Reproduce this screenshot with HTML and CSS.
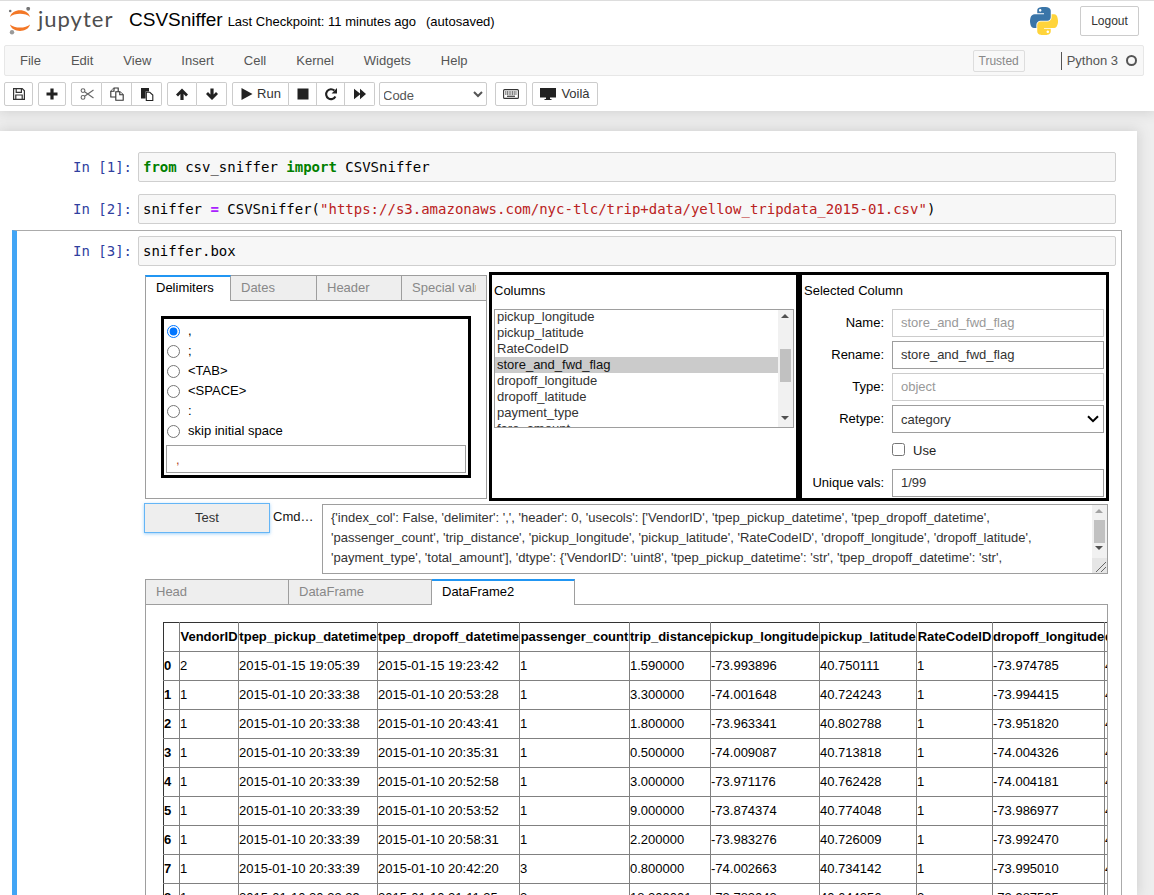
FILE: index.html
```html
<!DOCTYPE html>
<html lang="en">
<head>
<meta charset="utf-8">
<title>CSVSniffer</title>
<link rel="stylesheet" href="styles.css">
</head>
<body>
<header class="site-head">
  <div class="title-bar">
    <div class="logo">
      <svg class="logo-mark" width="24" height="28" viewBox="8 7 24 28">
        <path fill="#f37726" d="M10 17C12 8 28 8 30 17C26 12.6 14 12.6 10 17Z"/>
        <path fill="#f37726" d="M10 24.5C12 33 28 33 30 24.5C26 28.6 14 28.6 10 24.5Z"/>
        <circle cx="28.2" cy="8.8" r="1.9" fill="#767677"/>
        <circle cx="10.2" cy="11" r="1.3" fill="#767677"/>
        <circle cx="12" cy="32.2" r="2.2" fill="#9a9a9a"/>
      </svg>
      <span class="logo-word">jupyter</span>
    </div>
    <span class="nb-name">CSVSniffer</span>
    <span class="checkpoint">Last Checkpoint: 11 minutes ago</span>
    <span class="autosaved">(autosaved)</span>
    <svg class="py-logo" width="28" height="28" viewBox="0 0 111 111">
      <path fill="#3a75a8" d="M54.9 0C50.3 0 46 .4 42.1 1.1 30.8 3.1 28.7 7.3 28.7 15v10.2h26.8v3.4H18.6C10.8 28.7 4 33.3 1.9 42.3c-2.5 10.2-2.6 16.6 0 27.2C3.8 77.500 8.300 83.100 16.100 83.100h9.200V70.900c0-8.800 7.700-16.700 16.800-16.700h26.800c7.500 0 13.400-6.100 13.400-13.600V15c0-7.300-6.100-12.700-13.400-13.900C64.300.3 59.500 0 54.900 0Zm-14.500 8.200c2.800 0 5 2.300 5 5.100s-2.300 5.100-5 5.100-5-2.300-5-5.100 2.300-5.100 5-5.100Z"/>
      <path fill="#ffd43b" d="M85.600 28.700v11.900c0 9.200-7.800 17-16.700 17H42.100c-7.300 0-13.400 6.300-13.400 13.600v25.500c0 7.300 6.300 11.500 13.400 13.600 8.500 2.500 16.600 2.900 26.800 0 6.800-2 13.400-5.900 13.400-13.600V86.500H55.500v-3.400h40.200c7.800 0 10.700-5.400 13.400-13.600 2.800-8.400 2.700-16.500 0-27.200-1.900-7.800-5.600-13.600-13.400-13.600Zm-15.100 64.600c2.800 0 5 2.300 5 5.100s-2.300 5.100-5 5.100-5-2.300-5-5.100 2.300-5.100 5-5.100Z"/>
    </svg>
    <div class="logout">Logout</div>
  </div>
  <nav class="menubar">
    <span class="menu-item">File</span>
    <span class="menu-item">Edit</span>
    <span class="menu-item">View</span>
    <span class="menu-item">Insert</span>
    <span class="menu-item">Cell</span>
    <span class="menu-item">Kernel</span>
    <span class="menu-item">Widgets</span>
    <span class="menu-item">Help</span>
    <span class="trusted">Trusted</span>
    <span class="kernel-name">Python 3</span>
    <span class="kernel-dot"></span>
  </nav>
  <div class="toolbar">
    <div class="btn w29"><svg class="ico" viewBox="0 0 14 14"><path fill="none" stroke="#333" stroke-width="1.2" d="M1.600 1.600h8.600l2.200 2.200v8.600H1.600ZM4.200 1.600v3.800h5.200V1.600M3.800 12.400V8h6.400v4.400"/></svg></div>
    <div class="btn w28"><svg class="ico" viewBox="0 0 14 14"><path fill="#222" d="M5.400 1.500h3.200v3.900h3.900v3.200H8.600v3.900H5.400V8.600H1.500V5.400h3.900Z"/></svg></div>
    <div class="group">
      <div class="btn w31"><svg class="ico" viewBox="0 0 14 14"><g fill="none" stroke="#666" stroke-width="1.100"><circle cx="3" cy="3.600" r="1.900"/><circle cx="3" cy="10.400" r="1.900"/><path d="M4.600 4.700 13.500 11M4.600 9.300 13.500 3"/></g></svg></div>
      <div class="btn w30"><svg class="ico" viewBox="0 0 14 14"><g fill="#fff" stroke="#333" stroke-width="1.100"><path d="M.800 4.300 4 1h4.200v9H.800Z"/><path d="M4 1v3.300H.800"/><path d="M5.800 4.800h4.100l3.300 3V13.300H5.800Z"/><path d="M9.800 4.800v3h3.300"/></g></svg></div>
      <div class="btn w30"><svg class="ico" viewBox="0 0 14 14"><path fill="#222" d="M1 1h8v3.500H5.600v6.900H1Z"/><path fill="#fff" stroke="#222" stroke-width="1.100" d="M6.300 5.300h3.500l3 2.800v5.400H6.300Z"/></svg></div>
    </div>
    <div class="group">
      <div class="btn w30"><svg class="ico" viewBox="0 0 14 14"><path fill="#222" d="M7 1.500 13 7.500 11 9.500 8.600 7.100V13H5.400V7.100L3 9.500 1 7.500Z"/></svg></div>
      <div class="btn w30"><svg class="ico" viewBox="0 0 14 14"><path fill="#222" d="M7 13 13 7 11 5 8.600 7.400V1.500H5.400V7.400L3 5 1 7Z"/></svg></div>
    </div>
    <div class="group">
      <div class="btn run"><svg class="ico" viewBox="0 0 14 14"><path fill="#222" d="M1.500 1 12.500 7 1.500 13Z"/></svg><span>Run</span></div>
      <div class="btn w28"><svg class="ico" viewBox="0 0 14 14"><rect x="1.500" y="1.500" width="11" height="11" fill="#222"/></svg></div>
      <div class="btn w28"><svg class="ico" viewBox="0 0 14 14"><path fill="none" stroke="#222" stroke-width="2.100" d="M11.400 9.400A4.900 4.900 0 1 1 10.400 3.600"/><path fill="#222" d="M13 1v5.400H7.600Z"/></svg></div>
      <div class="btn w30"><svg class="ico" viewBox="0 0 14 14"><path fill="#222" d="M1 1.800 7 6.400V1.800L13 7 7 12.200V7.600L1 12.200Z"/></svg></div>
    </div>
    <select class="cell-type"><option>Code</option></select>
    <div class="btn kbd"><svg class="ico-wide" viewBox="0 0 16 14"><rect x=".600" y="2.600" width="14.800" height="8.800" rx="1" fill="none" stroke="#333" stroke-width="1.100"/><path stroke="#555" stroke-width="1.400" stroke-dasharray="1.100 .6" d="M2.200 5h11.600M2.200 7h11.600"/><path stroke="#555" stroke-width="1.400" d="M4 9.300h8"/></svg></div>
    <div class="btn voila"><svg class="ico-wide" viewBox="0 0 16 14"><path fill="#222" d="M0 1h16v9.500H0ZM6 10.500h4v1.500h1.500v1h-7v-1H6Z"/></svg><span>Voilà</span></div>
  </div>
</header>

<main class="notebook">
  <section class="cell">
    <div class="prompt">In&nbsp;[1]:</div>
    <div class="code"><b class="kw">from</b> csv_sniffer <b class="kw">import</b> CSVSniffer</div>
  </section>
  <section class="cell">
    <div class="prompt">In&nbsp;[2]:</div>
    <div class="code">sniffer <b class="op">=</b> CSVSniffer(<span class="str">"https://s3.amazonaws.com/nyc-tlc/trip+data/yellow_tripdata_2015-01.csv"</span>)</div>
  </section>
  <section class="cell cell-selected">
    <div class="input-row">
      <div class="prompt">In&nbsp;[3]:</div>
      <div class="code">sniffer.box</div>
    </div>
    <div class="sniffer">
      <div class="top-row">
        <div class="tabset">
          <div class="tabs">
            <div class="tab tab-active t86"><span class="tab-label">Delimiters</span></div>
            <div class="tab t86"><span class="tab-label">Dates</span></div>
            <div class="tab t85"><span class="tab-label">Header</span></div>
            <div class="tab t85"><span class="tab-label">Special values</span></div>
          </div>
          <div class="delim-panel">
            <div class="black delim-box">
              <label class="radio"><input type="radio" name="d" checked><span>,</span></label>
              <label class="radio"><input type="radio" name="d"><span>;</span></label>
              <label class="radio"><input type="radio" name="d"><span>&lt;TAB&gt;</span></label>
              <label class="radio"><input type="radio" name="d"><span>&lt;SPACE&gt;</span></label>
              <label class="radio"><input type="radio" name="d"><span>:</span></label>
              <label class="radio"><input type="radio" name="d"><span>skip initial space</span></label>
              <div class="delim-input">,</div>
            </div>
          </div>
        </div>
        <div class="black col-box">
          <div class="box-title">Columns</div>
          <div class="listbox">
            <div class="list-rows">
              <div class="opt">pickup_longitude</div>
              <div class="opt">pickup_latitude</div>
              <div class="opt">RateCodeID</div>
              <div class="opt opt-sel">store_and_fwd_flag</div>
              <div class="opt">dropoff_longitude</div>
              <div class="opt">dropoff_latitude</div>
              <div class="opt">payment_type</div>
              <div class="opt">fare_amount</div>
            </div>
            <div class="sbar">
              <span class="arrow-up"></span>
              <span class="thumb list-thumb"></span>
              <span class="arrow-down list-down"></span>
            </div>
          </div>
        </div>
        <div class="black sel-box">
          <div class="box-title">Selected Column</div>
          <div class="field"><span class="lab">Name:</span><span class="val val-off">store_and_fwd_flag</span></div>
          <div class="field"><span class="lab">Rename:</span><span class="val">store_and_fwd_flag</span></div>
          <div class="field"><span class="lab">Type:</span><span class="val val-off">object</span></div>
          <div class="field"><span class="lab">Retype:</span>
            <div class="select-wrap">
              <select class="val-select"><option>category</option></select>
              <svg class="chevron" width="12" height="8" viewBox="0 0 12 8"><path fill="none" stroke="#000" stroke-width="2" d="M1 1.200 6 6.200 11 1.200"/></svg>
            </div>
          </div>
          <label class="field"><span class="lab"></span><input class="use-box" type="checkbox"><span class="use-text">Use</span></label>
          <div class="field"><span class="lab">Unique vals:</span><span class="val">1/99</span></div>
        </div>
      </div>
      <div class="cmd-row">
        <div class="test-btn">Test</div>
        <div class="cmd-label">Cmd…</div>
        <div class="cmd-area">
          <div class="cmd-text">{'index_col': False, 'delimiter': ',', 'header': 0, 'usecols': ['VendorID', 'tpep_pickup_datetime', 'tpep_dropoff_datetime',<br>'passenger_count', 'trip_distance', 'pickup_longitude', 'pickup_latitude', 'RateCodeID', 'dropoff_longitude', 'dropoff_latitude',<br>'payment_type', 'total_amount'], 'dtype': {'VendorID': 'uint8', 'tpep_pickup_datetime': 'str', 'tpep_dropoff_datetime': 'str',</div>
          <div class="sbar cmd-bar">
            <span class="arrow-up arrow-dim"></span>
            <span class="thumb cmd-thumb"></span>
            <span class="arrow-down cmd-down"></span>
            <span class="resizer"><svg width="15" height="15" viewBox="0 0 15 15"><path stroke="#666" fill="none" d="M4 14 14 4M9 14 14 9"/></svg></span>
          </div>
        </div>
      </div>
      <div class="tabs tabs-df">
        <div class="tab t144"><span class="tab-label">Head</span></div>
        <div class="tab t143"><span class="tab-label">DataFrame</span></div>
        <div class="tab tab-active t143"><span class="tab-label">DataFrame2</span></div>
      </div>
      <div class="df-panel">
        <table class="df">
          <colgroup>
            <col class="c-idx"><col class="c-vendor"><col class="c-pickup"><col class="c-dropoff"><col class="c-pass"><col class="c-trip"><col class="c-plon"><col class="c-plat"><col class="c-rate"><col class="c-dlon"><col class="c-dlat">
          </colgroup>
          <thead>
            <tr><th></th><th>VendorID</th><th>tpep_pickup_datetime</th><th>tpep_dropoff_datetime</th><th>passenger_count</th><th>trip_distance</th><th>pickup_longitude</th><th>pickup_latitude</th><th>RateCodeID</th><th>dropoff_longitude</th><th>dropoff_latitude</th></tr>
          </thead>
          <tbody>
            <tr><th>0</th><td>2</td><td>2015-01-15 19:05:39</td><td>2015-01-15 19:23:42</td><td>1</td><td>1.590000</td><td>-73.993896</td><td>40.750111</td><td>1</td><td>-73.974785</td><td>40.750618</td></tr>
            <tr><th>1</th><td>1</td><td>2015-01-10 20:33:38</td><td>2015-01-10 20:53:28</td><td>1</td><td>3.300000</td><td>-74.001648</td><td>40.724243</td><td>1</td><td>-73.994415</td><td>40.759109</td></tr>
            <tr><th>2</th><td>1</td><td>2015-01-10 20:33:38</td><td>2015-01-10 20:43:41</td><td>1</td><td>1.800000</td><td>-73.963341</td><td>40.802788</td><td>1</td><td>-73.951820</td><td>40.824413</td></tr>
            <tr><th>3</th><td>1</td><td>2015-01-10 20:33:39</td><td>2015-01-10 20:35:31</td><td>1</td><td>0.500000</td><td>-74.009087</td><td>40.713818</td><td>1</td><td>-74.004326</td><td>40.719986</td></tr>
            <tr><th>4</th><td>1</td><td>2015-01-10 20:33:39</td><td>2015-01-10 20:52:58</td><td>1</td><td>3.000000</td><td>-73.971176</td><td>40.762428</td><td>1</td><td>-74.004181</td><td>40.742653</td></tr>
            <tr><th>5</th><td>1</td><td>2015-01-10 20:33:39</td><td>2015-01-10 20:53:52</td><td>1</td><td>9.000000</td><td>-73.874374</td><td>40.774048</td><td>1</td><td>-73.986977</td><td>40.758194</td></tr>
            <tr><th>6</th><td>1</td><td>2015-01-10 20:33:39</td><td>2015-01-10 20:58:31</td><td>1</td><td>2.200000</td><td>-73.983276</td><td>40.726009</td><td>1</td><td>-73.992470</td><td>40.749634</td></tr>
            <tr><th>7</th><td>1</td><td>2015-01-10 20:33:39</td><td>2015-01-10 20:42:20</td><td>3</td><td>0.800000</td><td>-74.002663</td><td>40.734142</td><td>1</td><td>-73.995010</td><td>40.726326</td></tr>
            <tr><th>8</th><td>1</td><td>2015-01-10 20:33:39</td><td>2015-01-10 21:11:35</td><td>3</td><td>18.200001</td><td>-73.783043</td><td>40.644356</td><td>2</td><td>-73.987595</td><td>40.759357</td></tr>
          </tbody>
        </table>
      </div>
    </div>
  </section>
</main>
</body>
</html>
```
FILE: styles.css
```css
* { box-sizing: border-box; }
html, body { height: 895px; margin: 0; overflow: hidden; }
body {
  background: #eee;
  color: #000;
  font: 13px/18px "Liberation Sans", Arial, sans-serif;
  display: flex;
  flex-direction: column;
}

/* header */
.site-head {
  flex: none;
  height: 111px;
  background: #fff;
  border-top: 1px solid #ddd;
  box-shadow: 0 0 12px 1px rgba(87, 87, 87, .2);
  position: relative;
  z-index: 2;
}
.title-bar {
  display: flex;
  align-items: center;
  height: 44px;
}
.logo { display: flex; align-items: center; width: 129px; padding-left: 8px; height: 40px; margin-top: -4px; }
.logo-mark { flex: none; }
.logo-word {
  font: 22px/30px Lato, sans-serif;
  letter-spacing: 1px;
  color: #4e4e4e;
  margin-left: 6px;
  margin-top: -4px;
}
.nb-name { font-size: 19px; color: #000; margin-top: -6px; }
.checkpoint { margin-left: 5px; margin-top: -2px; color: #000; }
.autosaved { margin-left: 10px; margin-top: -2px; }
.py-logo { margin-left: auto; margin-top: -4px; }
.logout {
  margin: -4px 15px 0 22px;
  width: 59px;
  height: 30px;
  border: 1px solid #ccc;
  border-radius: 2px;
  font-size: 12px;
  color: #333;
  display: flex;
  align-items: center;
  justify-content: center;
}
.menubar {
  display: flex;
  align-items: center;
  height: 31px;
  margin: 0 10px 0 4px;
  padding-left: 15px;
  background: #f8f8f8;
  border: 1px solid #e7e7e7;
  border-radius: 2px;
  color: #555;
  gap: 30px;
}
.menu-item { color: #555; }
.trusted {
  margin-left: auto;
  margin-right: 6px;
  width: 52px;
  height: 22px;
  border: 1px solid #ddd;
  border-radius: 2px;
  font-size: 12px;
  color: #888;
  display: flex;
  align-items: center;
  justify-content: center;
}
.kernel-name {
  margin-left: 0;
  padding-left: 5px;
  border-left: 1px solid #555;
  height: 18px;
  line-height: 18px;
}
.kernel-dot {
  width: 11px;
  height: 11px;
  border: 2px solid #555;
  border-radius: 50%;
  margin: 0 6px 0 -22px;
}
.toolbar {
  display: flex;
  align-items: flex-start;
  gap: 5px;
  margin: 6px 0 0 4px;
}
.btn {
  height: 24px;
  flex: none;
  display: flex;
  align-items: center;
  justify-content: center;
  gap: 3px;
  border: 1px solid #ccc;
  border-radius: 2px;
  background: #fff;
  color: #333;
}
.ico { width: 14px; height: 14px; display: block; }
.ico-wide { width: 16px; height: 14px; display: block; }
.w28 { width: 28px; }
.w29 { width: 29px; }
.w30 { width: 30px; }
.w31 { width: 31px; }
.group { display: flex; }
.group .btn { border-radius: 0; }
.group .btn + .btn { border-left: 0; }
.group .btn:first-child { border-radius: 2px 0 0 2px; }
.group .btn:last-child { border-radius: 0 2px 2px 0; }
.run { width: 57px; }
.voila { width: 66px; gap: 5px; }
.cell-type {
  width: 108px;
  height: 24px;
  margin-left: -1px;
  border: 1px solid #ccc;
  border-radius: 2px;
  background: #fff;
  color: #555;
  font: 13px "Liberation Sans", Arial, sans-serif;
  padding: 3px 0 0 0;
  text-indent: -1px;
}
.kbd { width: 32px; margin-left: 3px; }

/* notebook */
.notebook {
  flex: 1;
  min-height: 0;
  width: 1137px;
  margin-top: 20px;
  padding: 15px 15px 0 12px;
  background: #fff;
  box-shadow: 0 0 12px 1px rgba(87, 87, 87, .2);
  overflow: hidden;
}
.cell {
  display: flex;
  padding: 5px 5px 5px 6px;
  border: 1px solid transparent;
  height: 42px;
}
.cell-selected {
  display: block;
  height: auto;
  border-color: #ababab;
  border-left: 5px solid #42a5f5;
  padding: 5px 5px 0 0;
  width: 1110px;
  position: relative;
}
.input-row { display: flex; }
.prompt {
  flex: none;
  width: 119px;
  padding-right: 6px;
  text-align: right;
  font: 14px/30px "DejaVu Sans Mono", monospace;
  color: #303f9f;
}
.input-row .prompt { width: 121px; }
.code {
  flex: 1;
  height: 30px;
  padding-left: 4px;
  background: #f7f7f7;
  border: 1px solid #cfcfcf;
  border-radius: 2px;
  font: 14px/28px "DejaVu Sans Mono", monospace;
  color: #000;
  white-space: pre;
}
.kw { color: #008000; }
.op { color: #a2f; }
.str { color: #ba2121; }

/* widget */
.sniffer { margin: 6px 0 0 128px; width: 963px; }
.top-row { display: flex; height: 229px; }
.tabset { width: 342px; margin: 3px 2px 0 0; flex: none; }
.tabs { display: flex; height: 26px; position: relative; z-index: 1; }
.tab {
  flex: none;
  height: 26px;
  padding: 2px 10px 0 10px;
  line-height: 20px;
  background: #eee;
  border: 1px solid #9e9e9e;
  border-left-width: 0;
  color: #888;
  white-space: nowrap;
}
.tab-label { display: block; overflow: hidden; }
.tab:first-child { border-left-width: 1px; }
.tab-active {
  background: #fff;
  color: #000;
  border-top: 2px solid #2196f3;
  border-bottom: 0;
  padding-top: 1px;
}
.t86 { width: 86px; }
.t85 { width: 85px; }
.t143 { width: 143px; }
.t144 { width: 144px; }
.delim-panel {
  height: 199px;
  margin-top: -1px;
  padding: 15px 15px 0;
  border: 1px solid #9e9e9e;
}
.black { border: 3px solid #000; }
.delim-box { width: 310px; height: 162px; padding: 2px 2px 0; }
.radio { display: flex; align-items: center; height: 20px; gap: 8px; padding-left: 1px; }
.radio input { margin: 0; width: 13px; height: 13px; flex: none; }
.delim-input {
  width: 300px;
  height: 28px;
  margin-top: 4px;
  padding: 5px 0 0 9px;
  border: 1px solid #9e9e9e;
  color: #b5442a;
}
.col-box, .sel-box { width: 310px; flex: none; padding: 0 2px; }
.box-title { height: 30px; margin-bottom: 4px; line-height: 31px; }
.listbox {
  display: flex;
  width: 300px;
  height: 119px;
  border: 1px solid #9e9e9e;
  overflow: hidden;
  color: #333;
}
.list-rows { flex: 1; min-width: 0; margin-top: -1px; }
.opt { height: 16px; line-height: 16px; padding-left: 2px; white-space: nowrap; }
.opt-sel { background: #cbcbcb; color: #111; }
.sbar { flex: none; width: 15px; background: #f1f1f1; position: relative; }
.arrow-up, .arrow-down {
  position: absolute;
  left: 3px;
  width: 0;
  height: 0;
  border: 4px solid transparent;
  border-left-width: 4.500px;
  border-right-width: 4.500px;
}
.arrow-up { top: 4px; border-top: 0; border-bottom: 4px solid #505050; }
.arrow-down { border-bottom: 0; border-top: 4px solid #505050; }
.arrow-dim { border-bottom-color: #a3a3a3; }
.list-down { top: 106px; }
.thumb { position: absolute; left: 2px; width: 11px; background: #c1c1c1; }
.list-thumb { top: 39px; height: 33px; }
.field { display: flex; align-items: center; height: 28px; margin-bottom: 4px; }
.lab { flex: none; width: 80px; margin-right: 8px; text-align: right; color: #000; }
.val {
  width: 212px;
  height: 28px;
  padding-left: 8px;
  line-height: 26px;
  border: 1px solid #9e9e9e;
  color: #333;
}
.val-off { color: #999; border-color: #ccc; }
.select-wrap { position: relative; width: 212px; height: 28px; }
.val-select {
  appearance: none;
  display: block;
  width: 212px;
  height: 28px;
  padding-left: 8px;
  border: 1px solid #9e9e9e;
  border-radius: 0;
  background: #fff;
  color: #333;
  font: 13px "Liberation Sans", Arial, sans-serif;
}
.chevron { position: absolute; right: 5px; top: 10px; }
.use-box { margin: -3px 0 0; width: 13px; height: 13px; flex: none; }
.use-text { margin-left: 8px; color: #222; }
.cmd-row { display: flex; align-items: flex-start; margin-top: 2px; height: 71px; }
.test-btn {
  flex: none;
  width: 126px;
  height: 30px;
  margin-left: -1px;
  background: #eee;
  border: 1px solid #64b5f6;
  box-shadow: 0 1px 3px rgba(66, 165, 245, .5);
  color: #333;
  text-align: center;
  line-height: 28px;
}
.cmd-label { flex: none; width: 49px; margin-left: 3px; line-height: 28px; color: #111; }
.cmd-area {
  display: flex;
  flex: none;
  width: 786px;
  height: 70px;
  margin-top: 1px;
  border: 1px solid #9e9e9e;
  overflow: hidden;
}
.cmd-text {
  flex: 1;
  min-width: 0;
  padding: 3px 0 0 8px;
  line-height: 20px;
  color: #333;
  white-space: nowrap;
  overflow: hidden;
}
.cmd-bar { height: 68px; }
.cmd-thumb { top: 15px; height: 23px; }
.cmd-down { top: 41px; }
.resizer { position: absolute; left: 0; bottom: 0; width: 15px; height: 15px; background: #e6e6e6; display: block; }
.resizer svg { display: block; }
.tabs-df { margin-top: 5px; height: 26px; }
.df-panel {
  margin-top: -1px;
  height: 320px;
  padding: 17px 0 0 17px;
  border: 1px solid #9e9e9e;
  overflow: hidden;
}
.df {
  border-collapse: collapse;
  table-layout: fixed;
  width: 1092px;
  white-space: nowrap;
  color: #000;
}
.c-idx { width: 16px; }
.c-vendor { width: 59px; }
.c-pickup { width: 139px; }
.c-dropoff { width: 142px; }
.c-pass { width: 110px; }
.c-trip { width: 81px; }
.c-plon { width: 109px; }
.c-plat { width: 97px; }
.c-rate { width: 76px; }
.c-dlon { width: 112px; }
.c-dlat { width: 151px; }
.df tr { height: 29px; }
.df th, .df td {
  padding: 0;
  border: 1px solid #808080;
  text-align: left;
  font-size: 13px;
  line-height: 16px;
}
.df thead th { border-top-color: #333; text-align: center; }
.df thead th:last-child { text-align: left; }
.df tr > :first-child { border-left-color: #333; }
```
